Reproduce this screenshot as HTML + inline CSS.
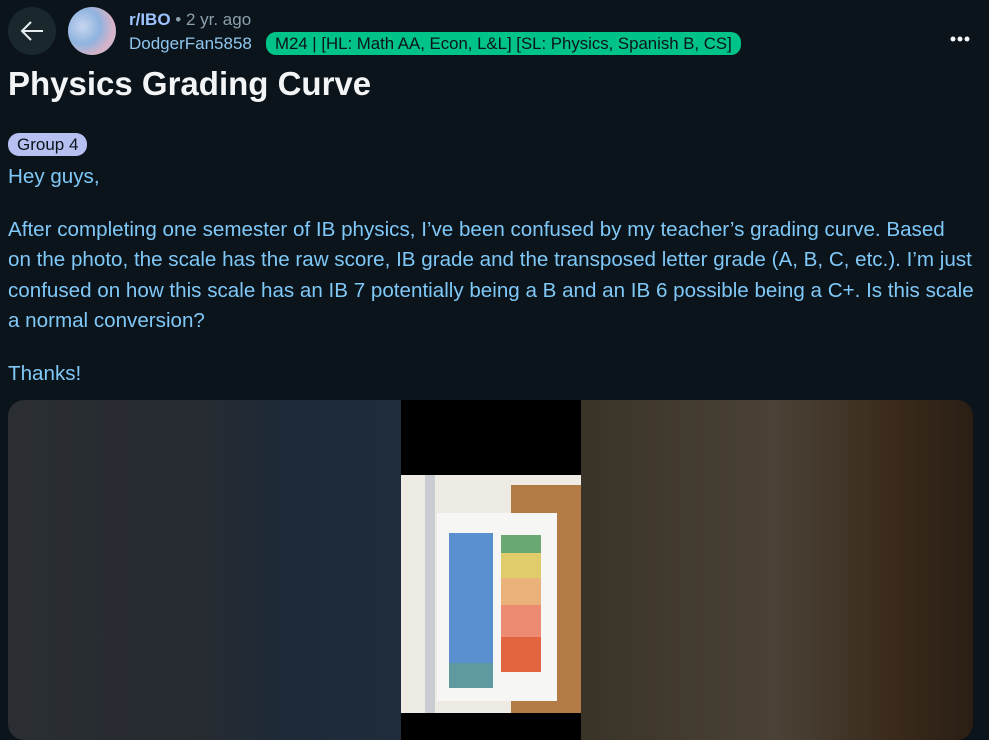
<!DOCTYPE html>
<html><head><meta charset="utf-8"><style>
body{margin:0;width:989px;height:729px;overflow:hidden;background:#0b141a;font-family:"Liberation Sans",sans-serif;position:relative}
.a{position:absolute}
.back{left:8px;top:7px;width:48px;height:48px;border-radius:50%;background:#1a282d}
.av{left:68px;top:7px;width:48px;height:48px;border-radius:50%;background:radial-gradient(circle at 30% 40%,#c8d6f0,#8fb3df 40%,#d9b3c8 70%,#a3c8e6)}
.sub{left:129px;top:10px;font-size:17px;color:#8ba0ad}
.sub b{color:#9fc4ff}
.user{left:129px;top:34px;font-size:17px;color:#8fc7f0}
.flair{left:266px;top:32px;background:#00c389;color:#0b141a;font-size:16.8px;border-radius:10px;padding:1px 9px;height:21px;line-height:21px}
h1{position:absolute;left:8px;top:65px;margin:0;font-size:33px;color:#f2f4f5;font-weight:bold}
.tag{left:8px;top:133px;background:#b6c1f2;color:#0b141a;font-size:17px;border-radius:11px;padding:0 9px;height:23px;line-height:23px}
.body{left:8px;top:162px;width:985px;font-size:20.6px;line-height:30.5px;color:#7fc8f8;white-space:nowrap}
.body p{margin:0 0 22px}
.dots{left:950px;top:29px}
.img{left:8px;top:400px;width:965px;height:340px;border-radius:16px;overflow:hidden;background:#000}
</style></head><body>
<div class="a back"><svg width="48" height="48" viewBox="0 0 48 48"><path d="M35 24H14M23 15l-9 9 9 9" stroke="#e8eef0" stroke-width="2" fill="none"/></svg></div>
<div class="a av"></div>
<div class="a sub"><b>r/IBO</b> • 2 yr. ago</div>
<div class="a user">DodgerFan5858</div>
<div class="a flair">M24 | [HL: Math AA, Econ, L&amp;L] [SL: Physics, Spanish B, CS]</div>
<div class="a dots"><svg width="22" height="6"><circle cx="3" cy="3" r="2.5" fill="#f2f4f5"/><circle cx="10" cy="3" r="2.5" fill="#f2f4f5"/><circle cx="17" cy="3" r="2.5" fill="#f2f4f5"/></svg></div>
<h1>Physics Grading Curve</h1>
<div class="a tag">Group 4</div>
<div class="a body"><p>Hey guys,</p><p>After completing one semester of IB physics, I’ve been confused by my teacher’s grading curve. Based<br>on the photo, the scale has the raw score, IB grade and the transposed letter grade (A, B, C, etc.). I’m just<br>confused on how this scale has an IB 7 potentially being a B and an IB 6 possible being a C+. Is this scale<br>a normal conversion?</p><p>Thanks!</p></div>
<div class="a img">
 <div class="a" style="left:0;top:0;width:393px;height:340px;background:linear-gradient(90deg,#2a2e33 0%,#262b31 50%,#1e2a38 70%,#1f2c3b 100%)"></div>
 <div class="a" style="left:573px;top:0;width:392px;height:340px;background:linear-gradient(90deg,#3a3328 0%,#4a4236 50%,#3a2a1c 80%,#2a1e14 100%)"></div>
 <div class="a" style="left:393px;top:75px;width:180px;height:238px;background:#eeeae4">
  <div class="a" style="left:110px;top:10px;width:70px;height:228px;background:#b27a45"></div>
  <div class="a" style="left:24px;top:0;width:10px;height:238px;background:#c9ccd0"></div>
  <div class="a" style="left:36px;top:38px;width:120px;height:188px;background:#f6f6f4"></div>
  <div class="a" style="left:48px;top:58px;width:44px;height:130px;background:#5a8fd0"></div>
  <div class="a" style="left:48px;top:188px;width:44px;height:25px;background:#5e9aa0"></div>
  <div class="a" style="left:100px;top:60px;width:40px;height:18px;background:#6aa873"></div>
  <div class="a" style="left:100px;top:78px;width:40px;height:25px;background:#e0cc6a"></div>
  <div class="a" style="left:100px;top:103px;width:40px;height:27px;background:#eab27a"></div>
  <div class="a" style="left:100px;top:130px;width:40px;height:32px;background:#ec8a72"></div>
  <div class="a" style="left:100px;top:162px;width:40px;height:35px;background:#e3653f"></div>
 </div>
</div>
</body></html>
